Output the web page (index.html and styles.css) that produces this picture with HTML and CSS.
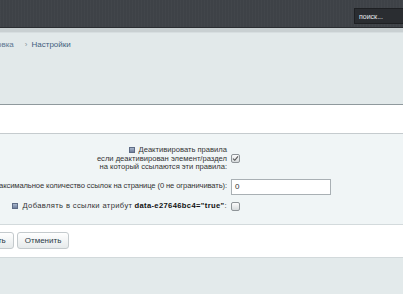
FILE: index.html
```html
<!DOCTYPE html>
<html lang="ru">
<head>
<meta charset="utf-8">
<title>Настройки</title>
<link rel="stylesheet" href="styles.css">
</head>
<body>
<header class="topbar">
  <div class="search">поиск...</div>
</header>
<div class="topline"></div>
<nav class="crumbs">
  <span class="crumb first">Перелинковка</span>
  <span class="sep">›</span>
  <span class="crumb">Настройки</span>
</nav>
<div class="titlebar"></div>
<form class="form">
  <div class="row">
    <div class="label multi">
      <div class="line"><span class="help"></span>Деактивировать правила</div>
      <div class="line">если деактивирован элемент/раздел</div>
      <div class="line">на который ссылаются эти правила:</div>
    </div>
    <div class="control"><span class="cb checked"><svg width="7" height="7" viewBox="0 0 7 7"><path d="M1 3.6 L2.8 5.3 L6 1.4" fill="none" stroke="#555" stroke-width="1.1"/></svg></span></div>
  </div>
  <div class="row">
    <div class="label narrow">Максимальное количество ссылок на странице (0 не ограничивать):</div>
    <div class="control"><span class="input">0</span></div>
  </div>
  <div class="row">
    <div class="label wide"><span class="help"></span>Добавлять в ссылки атрибут <b>data-e27646bc4="true"</b>:</div>
    <div class="control"><span class="cb"></span></div>
  </div>
</form>
<div class="buttons">
  <span class="btn">Сохранить</span>
  <span class="btn">Отменить</span>
</div>
<footer class="footer"></footer>
</body>
</html>
```
FILE: styles.css
```css
html, body {
  margin: 0;
  padding: 0;
}
body {
  width: 403px;
  height: 294px;
  overflow: hidden;
  font-family: "Liberation Sans", Arial, sans-serif;
  font-size: 8px;
  color: #222;
  background: #e3eaeb;
}
.topbar {
  height: 28px;
  background: #3e4247;
  background-image: repeating-linear-gradient(90deg, rgba(255,255,255,0.02) 0 1px, transparent 1px 3px);
  display: flex;
  align-items: center;
  justify-content: flex-end;
  box-sizing: border-box;
  border-bottom: 1px solid #2b2e32;
}
.search {
  width: 49px;
  height: 16px;
  margin-top: 4px;
  background: #2a2d31;
  border: 1px solid #1e2023;
  border-right: none;
  color: #e8ecef;
  font-size: 7px;
  line-height: 16px;
  padding-left: 4px;
  box-sizing: border-box;
}
.topline {
  height: 4px;
  background: #c9d0d2;
  border-bottom: 1px solid #d7dee0;
}
.crumbs {
  height: 72px;
  box-sizing: border-box;
  padding-top: 7px;
  display: flex;
  align-items: flex-start;
  margin-left: -39px;
  background: #e2e9ea;
  border-bottom: 1px solid #8f999d;
  color: #41607e;
}
.crumb.first {
  color: #5b7691;
}
.sep {
  color: #8a959c;
  font-size: 8px;
  margin: 0 4px 0 11px;
}
.titlebar {
  height: 28px;
  background: #fff;
  border-bottom: 1px solid #c5cbce;
}
.form {
  margin: 0;
  background: #f0f5f6;
  padding: 12px 0 13px;
  display: flex;
  flex-direction: column;
  gap: 7px;
  border-bottom: 1px solid #d3dadc;
}
.row {
  display: grid;
  grid-template-columns: 227px 1fr;
  column-gap: 4px;
  align-items: center;
}
.label {
  display: flex;
  justify-content: flex-end;
  white-space: nowrap;
  line-height: 8.5px;
  font-size: 7.6px;
  color: #333;
}
.label.wide {
  letter-spacing: 0.36px;
}
.label.narrow {
  letter-spacing: -0.1px;
}
.label.multi {
  flex-direction: column;
  align-items: flex-end;
}
.line {
  display: flex;
  align-items: center;
}
.label b {
  color: #111;
  font-weight: bold;
  margin-left: 2px;
}
.help {
  display: inline-block;
  width: 6px;
  height: 6px;
  margin-right: 4px;
  background: linear-gradient(#a8b6cc, #6f7f9c);
  border: 1px solid #5e6c86;
  box-sizing: border-box;
  align-self: center;
}
.control {
  display: flex;
  align-items: center;
}
.cb {
  width: 9px;
  height: 9px;
  box-sizing: border-box;
  border: 1px solid #8e9498;
  border-radius: 2px;
  background: linear-gradient(#fbfbfb, #d6dadc);
  display: flex;
  align-items: center;
  justify-content: center;
}
.input {
  width: 100px;
  height: 16px;
  box-sizing: border-box;
  border: 1px solid #a9b0b4;
  background: #fff;
  padding-left: 3px;
  line-height: 14px;
  color: #333;
}
.buttons {
  background: #fff;
  height: 33px;
  display: flex;
  align-items: center;
  gap: 3px;
  margin-left: -42px;
  padding-bottom: 1px;
  box-sizing: border-box;
  border-bottom: 1px solid #d2d9db;
}
.btn {
  height: 17px;
  box-sizing: border-box;
  padding: 0 7px;
  border: 1px solid #c4cacd;
  border-radius: 3px;
  background: linear-gradient(#ffffff, #e6eaeb);
  color: #2b3a46;
  line-height: 15px;
  font-size: 8px;
}
.footer {
  height: 40px;
  background: #e3eaeb;
}
```
